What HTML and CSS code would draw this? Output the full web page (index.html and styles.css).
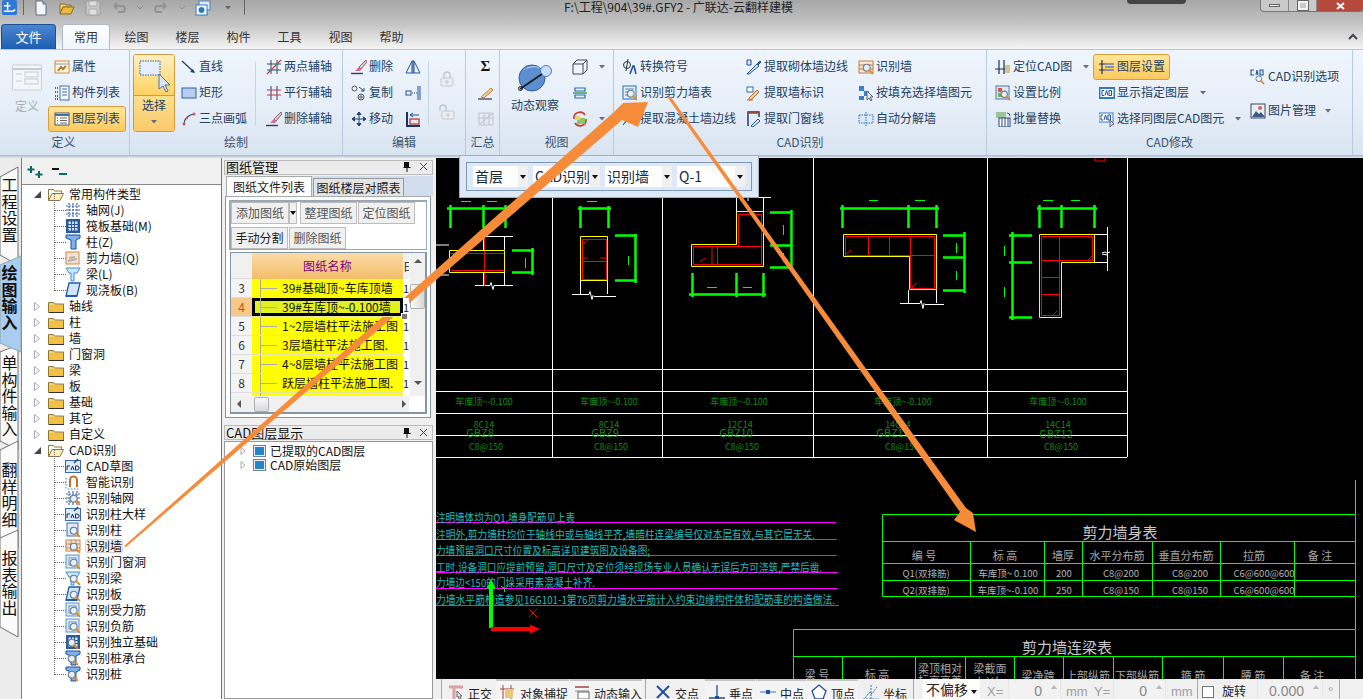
FILE: index.html
```html
<!DOCTYPE html>
<html lang="zh-CN">
<head>
<meta charset="utf-8">
<title>广联达-云翻样建模</title>
<link rel="stylesheet" href="styles.css">
</head>
<body>
<svg class="defs" width="0" height="0">
  <defs>
    <symbol id="mag" viewBox="0 0 16 16"><circle cx="7" cy="7" r="4.2" fill="#e8f0fa" stroke="#6a7f96" stroke-width="1.4"/><path d="M10 10l4 4" stroke="#d98a2b" stroke-width="2.4" stroke-linecap="round"/></symbol>
    <symbol id="grid" viewBox="0 0 16 16"><path d="M4 1v14M8 1v14M12 1v14M1 4h14M1 8h14M1 12h14" stroke="#3b66b8" stroke-width="1.2" stroke-dasharray="2 1" fill="none"/></symbol>
    <symbol id="raft" viewBox="0 0 16 16"><rect x="1" y="1" width="14" height="14" fill="#2a5a9c"/><rect x="3.5" y="3.5" width="9" height="9" fill="#cfe0f4"/><path d="M6.5 3v10M9.5 3v10M3 6.5h10M3 9.5h10" stroke="#2a5a9c"/></symbol>
    <symbol id="col" viewBox="0 0 16 16"><path d="M1 1h14v3l-4 2v9H6V6L1 4z" fill="#7fb2e6" stroke="#1f4f96"/></symbol>
    <symbol id="wall" viewBox="0 0 16 16"><rect x="1" y="2" width="13" height="12" fill="#efe3d6" stroke="#d9863f"/><path d="M3 11l9-2M4 8l6-1" stroke="#b9b0a8" stroke-width="2"/></symbol>
    <symbol id="beam" viewBox="0 0 16 16"><path d="M1 2h14l-3 5H9v8H6V7H4z" fill="#cfe6fa" stroke="#3f8fd0"/></symbol>
    <symbol id="slab" viewBox="0 0 16 16"><path d="M4 1h11l-3 13H1z" fill="#d4e4f7" stroke="#1f5ab0" stroke-width="1.3"/><path d="M1 14h11" stroke="#1f5ab0" stroke-width="2"/></symbol>
    <symbol id="cad" viewBox="0 0 16 16"><rect x=".5" y="2.5" width="15" height="12" fill="#dbe9f9" stroke="#3868ad"/><path d="M9 5l4-4" stroke="#24447c" stroke-width="1.4"/><path d="M2 12V8h3M6 12l1.500-4L9 12M10.500 8v4h1.600a2 2 0 000-4z" fill="none" stroke="#18325f"/></symbol>
    <symbol id="magnet" viewBox="0 0 16 16"><path d="M5 13V6a3.500 3.500 0 017 0v7" fill="none" stroke="#c8702a" stroke-width="2"/><path d="M1 4v11M3 15h10" stroke="#3b7fd0" stroke-dasharray="1.500 1.500" fill="none"/></symbol>
    <symbol id="dot" viewBox="0 0 16 16"><rect x="2" y="1" width="11" height="13" fill="#dfeaf7" stroke="#3f6eaf"/></symbol>
    <symbol id="door" viewBox="0 0 16 16"><rect x="1" y="1" width="13" height="13" fill="#dfeaf7" stroke="#5f8fc4"/><rect x="4" y="4" width="7" height="7" fill="#fff" stroke="#5f8fc4"/></symbol>
    <symbol id="brown" viewBox="0 0 16 16"><rect x="1" y="2" width="14" height="11" fill="#f6e8da" stroke="#cf7f4a"/><path d="M1 6h14M1 10h14M6 2v11M11 2v11" stroke="#cf7f4a"/></symbol>
    <symbol id="folder" viewBox="0 0 16 13"><path d="M.5 2.500h5l1 1.500h9v8.500H.5z" fill="#f7d266" stroke="#8a7a40"/><path d="M1 5h14v7H1z" fill="#f4c043"/><path d="M1 12.500h15" stroke="#333"/></symbol>
    <symbol id="folder-open" viewBox="0 0 16 13"><path d="M.5 1.500h5l1 1.500h7v2" fill="#fff6d8" stroke="#8a7a40"/><path d="M.5 12.500V1.500M.5 12.500h11.500l3.500-7H4z" fill="#fdeebc" stroke="#8a7a40"/></symbol>
    <symbol id="layer" viewBox="0 0 13 12"><rect x=".5" y=".5" width="12" height="11" fill="#eef" stroke="#6a8196"/><rect x="2" y="2" width="9" height="8" fill="#2585c6"/></symbol>
    <symbol id="brush" viewBox="0 0 16 16"><path d="M15 1l-7 7 2 2 6-7z" fill="#f0c8b0" stroke="#5f4a6a" stroke-width=".8"/><path d="M8 8c-2 1-2 3-4 4h5c1-1 1-1 1-2z" fill="#e85fa0"/><path d="M0 14.500h12" stroke="#2b3f5f" stroke-width="1.400"/></symbol>
    <symbol id="small-arrow" viewBox="0 0 6 4"><path d="M0 0h6L3 3.500z" fill="#5d6e80"/></symbol>
  </defs>
</svg>

<div class="app">
  <header class="titlebar">
    <div class="qat">
      <svg class="app-logo" viewBox="0 0 16 16"><rect width="16" height="16" rx="2" fill="#2f78d8"/><path d="M6 2v9M2 6h7M2 12h10l2-2" stroke="#fff" stroke-width="1.600" fill="none"/></svg>
      <span class="qat-sep"></span>
      <svg class="qat-ic first" viewBox="0 0 16 16"><path d="M3 1h7l3 3v11H3z" fill="#f4f6f9" stroke="#5f6d7c"/><path d="M10 1v3h3" fill="#aab6c4" stroke="#5f6d7c"/></svg>
      <svg class="qat-ic" viewBox="0 0 16 16"><path d="M1 4h5l1 1h5v2H4l-3 7z" fill="#f4d27a" stroke="#8a6d1f"/><path d="M1 14l3-7h11l-3 7z" fill="#eeb93f" stroke="#8a6d1f"/></svg>
      <svg class="qat-ic" viewBox="0 0 16 16"><path d="M1 1h12l2 2v12H1z" fill="#c8c8c8" stroke="#9c9c9c"/><path d="M4 1h8v5H4zM4 9h8v6H4z" fill="#dedede" stroke="#a9a9a9"/></svg>
      <svg class="qat-ic dim" viewBox="0 0 16 16"><path d="M3 6h8a3 3 0 010 6H7M3 6l3-3M3 6l3 3" fill="none" stroke="#929292" stroke-width="2"/></svg>
      <svg class="qat-arrow" viewBox="0 0 6 4"><path d="M0 0l3 3 3-3" fill="none" stroke="#8a8a8a"/></svg>
      <svg class="qat-ic dim" viewBox="0 0 16 16"><path d="M13 6H5a3 3 0 000 6h4M13 6l-3-3M13 6l-3 3" fill="none" stroke="#929292" stroke-width="2"/></svg>
      <svg class="qat-arrow" viewBox="0 0 6 4"><path d="M0 0l3 3 3-3" fill="none" stroke="#8a8a8a"/></svg>
      <svg class="qat-ic" viewBox="0 0 16 16"><rect x="4" y="1" width="11" height="9" fill="#dceaf7" stroke="#4f83bf"/><rect x="1" y="5" width="11" height="10" fill="#fff" stroke="#2f78c8"/><circle cx="6.500" cy="10" r="3" fill="#2f78c8"/></svg>
      <svg class="qat-arrow down" viewBox="0 0 6 4"><path d="M0 0h6L3 3.500z" fill="#666"/></svg>
      <span class="qat-sep late"></span>
    </div>
    <div class="title-text">F:\工程\904\39#.GFY2 - 广联达-云翻样建模</div>
    <div class="handle"></div>
    <div class="winbtns">
      <span class="winbtn"><i class="w-min"></i></span>
      <span class="winbtn"><i class="w-max"></i></span>
      <span class="winbtn close"><svg class="w-x" viewBox="0 0 9 8"><path d="M1 1l7 6M8 1L1 7" stroke="#fff" stroke-width="2"/></svg></span>
    </div>
  </header>

  <nav class="tabs">
    <span class="file-tab">文件</span>
    <span class="tab active">常用</span>
    <span class="tab">绘图</span>
    <span class="tab">楼层</span>
    <span class="tab">构件</span>
    <span class="tab">工具</span>
    <span class="tab">视图</span>
    <span class="tab">帮助</span>
    <svg class="collapse" viewBox="0 0 10 8"><path d="M1 7l4-4 4 4" fill="none" stroke="#445" stroke-width="2"/></svg>
  </nav>

  <section class="ribbon">
    <div class="group g1">
      <div class="rb-body">
        <div class="big disabled">
          <svg class="big-ic" viewBox="0 0 30 30"><rect x=".5" y="1" width="29" height="25" rx="1" fill="#f3f6fa" stroke="#c6ccd3"/><path d="M1 5h28" stroke="#c6ccd3" stroke-width="2"/><path d="M4 10h6M4 17h6" stroke="#c6ccd3"/><rect x="13" y="8" width="13" height="5" fill="none" stroke="#c6ccd3"/><rect x="13" y="15" width="13" height="5" fill="none" stroke="#c6ccd3"/></svg>
          <span class="big-label">定义</span>
        </div>
        <div class="col">
          <div class="item"><svg class="ic" viewBox="0 0 16 16"><rect x="1" y="2" width="14" height="12" fill="#fff5e0" stroke="#d88a3a"/><path d="M1 5h14" stroke="#7f9fc4"/><path d="M4 12l3-4 2 2 3-3" fill="none" stroke="#b57a20" stroke-width="2"/></svg><span>属性</span></div>
          <div class="item"><svg class="ic" viewBox="0 0 16 16"><path d="M1 3h3M1 7h3M1 11h3M1 14h3" stroke="#333" stroke-width="1.500" stroke-dasharray="1 1"/><rect x="6" y="1" width="9" height="14" fill="#f3f7fc" stroke="#4a6f9f"/><path d="M8 4h5M8 7h5M8 10h5" stroke="#4a6f9f"/></svg><span>构件列表</span></div>
          <div class="item on"><svg class="ic" viewBox="0 0 16 16"><rect x="1" y="2" width="14" height="12" fill="#fff" stroke="#555"/><path d="M1 4h14" stroke="#3f6fb0" stroke-width="2"/><path d="M6 7h7M6 9.500h7M6 12h7M3 7h1M3 9.500h1M3 12h1" stroke="#666"/></svg><span>图层列表</span></div>
        </div>
      </div>
      <div class="rb-label">定义</div>
    </div>

    <div class="group g2">
      <div class="rb-body">
        <div class="select-btn">
          <div class="select-top"><svg class="select-ic" viewBox="0 0 32 34"><rect x="1" y="1" width="20" height="14" fill="#e6eefa" stroke="#2c5fb0" stroke-dasharray="1.500 1"/><path d="M20 14v15l4-3 3 6 2-1-3-6h5z" fill="#d8e6f8" stroke="#4a72a8"/></svg></div>
          <div class="select-bottom"><span>选择</span><svg class="arrow" viewBox="0 0 6 4"><use href="#small-arrow"/></svg></div>
        </div>
        <div class="col w80">
          <div class="item"><svg class="ic" viewBox="0 0 16 16"><path d="M1 2l12 11" stroke="#1e3f6f" stroke-width="1.300"/><path d="M14 14l-5-1 3-3z" fill="#1e3f6f"/></svg><span>直线</span></div>
          <div class="item"><svg class="ic" viewBox="0 0 16 16"><rect x="1" y="3" width="14" height="10" fill="#b8cef0" stroke="#2c5fb0"/></svg><span>矩形</span></div>
          <div class="item"><svg class="ic" viewBox="0 0 16 16"><path d="M3 13C3 8 7 4 13 3" fill="none" stroke="#2b4f7f" stroke-width="1.200"/><circle cx="3" cy="13" r="1.500" fill="#d9534f"/><circle cx="13" cy="3" r="1.500" fill="#d9534f"/><circle cx="6" cy="7" r="1.200" fill="#d9534f"/></svg><span>三点画弧</span></div>
        </div>
        <span class="vsep"></span>
        <div class="col">
          <div class="item"><svg class="ic" viewBox="0 0 16 16"><path d="M5 1v14M11 1v14M1 5h14M1 11h14" stroke="#24447c"/><path d="M1 15L15 1" stroke="#d9343a" stroke-width="1.300"/><circle cx="5" cy="11" r="1.300" fill="#3e8f3e"/><circle cx="11" cy="5" r="1.300" fill="#3e8f3e"/></svg><span>两点辅轴</span></div>
          <div class="item"><svg class="ic" viewBox="0 0 16 16"><path d="M5 1v14M11 1v14" stroke="#24447c"/><path d="M1 5h14M1 10h14" stroke="#c8343a"/></svg><span>平行辅轴</span></div>
          <div class="item"><svg class="ic"><use href="#brush"/></svg><span>删除辅轴</span></div>
        </div>
      </div>
      <div class="rb-label">绘制</div>
    </div>

    <div class="group g3">
      <div class="rb-body">
        <div class="col">
          <div class="item"><svg class="ic"><use href="#brush"/></svg><span>删除</span></div>
          <div class="item"><svg class="ic" viewBox="0 0 16 16"><circle cx="3.500" cy="3.500" r="2.500" fill="none" stroke="#556"/><circle cx="10" cy="12" r="3" fill="none" stroke="#556"/><circle cx="10" cy="12" r="1.200" fill="none" stroke="#556"/><path d="M8 2l5 4M13 6V3M13 6h-3" fill="none" stroke="#24447c"/></svg><span>复制</span></div>
          <div class="item"><svg class="ic" viewBox="0 0 16 16"><path d="M8 1v14M1 8h14M8 1L6 3.500h4zM8 15l-2-2.500h4zM1 8l2.500-2v4zM15 8l-2.500-2v4z" fill="#24447c" stroke="#24447c"/></svg><span>移动</span></div>
        </div>
        <div class="col icons w28">
          <div class="item"><svg class="ic" viewBox="0 0 16 16"><path d="M7 2L1 14h6zM9 2l6 12H9z" fill="#eef4fb" stroke="#24509c"/><path d="M8 1v14" stroke="#24509c"/></svg></div>
          <div class="item"><svg class="ic" viewBox="0 0 16 16"><path d="M13 1v14M15 1v14" stroke="#24509c"/><rect x="1" y="6" width="5" height="4" fill="#eef4fb" stroke="#24509c"/><path d="M7 8h5" stroke="#24509c" stroke-dasharray="1 1"/></svg></div>
          <div class="item"><svg class="ic" viewBox="0 0 16 16"><path d="M2 1v14h13" stroke="#18326f" stroke-width="2" fill="none"/><rect x="5" y="8" width="9" height="5" fill="none" stroke="#c8343a" stroke-width="1.300"/><path d="M5 4h9M5 4l3-2M5 4l3 2" fill="none" stroke="#24509c"/></svg></div>
        </div>
        <span class="vsep tall"></span>
        <div class="locks">
          <svg class="ic" viewBox="0 0 16 16"><rect x="2" y="7" width="12" height="8" rx="1" fill="#eaedf1" stroke="#c3c9d1"/><path d="M5 7V4a3 3 0 016 0v3" fill="none" stroke="#c3c9d1" stroke-width="1.500"/><path d="M6 11h4M8 9v4" stroke="#c3c9d1"/></svg>
          <svg class="ic" viewBox="0 0 16 16"><rect x="3" y="7" width="12" height="8" rx="1" fill="#eaedf1" stroke="#c3c9d1"/><path d="M1 7V4a3 3 0 016 0v3" fill="none" stroke="#c3c9d1" stroke-width="1.500"/><path d="M7 11h4M9 9v4" stroke="#c3c9d1"/></svg>
        </div>
      </div>
      <div class="rb-label">编辑</div>
    </div>

    <div class="group g4">
      <div class="rb-body center">
        <div class="col icons">
          <div class="item"><span class="sigma">Σ</span></div>
          <div class="item"><svg class="ic" viewBox="0 0 16 16"><path d="M3 12L13 3l2 2-9 8z" fill="#f2c8a0" stroke="#c8843a"/><path d="M0 14h14" stroke="#333" stroke-width="1.200"/></svg></div>
          <div class="item"><svg class="ic" viewBox="0 0 16 16"><path d="M1 2h14v12H1zM1 7h14M6 2v12M11 2v12M2 13L14 3" fill="none" stroke="#bfc4ca"/></svg></div>
        </div>
      </div>
      <div class="rb-label">汇总</div>
    </div>

    <div class="group g5">
      <div class="rb-body">
        <div class="big orbit">
          <svg class="orbit-ic" viewBox="0 0 34 30"><circle cx="14" cy="15" r="13" fill="#5c8ed0" stroke="#2b5a9e"/><path d="M4 9a14 14 0 0120-3C18 3 8 4 4 9z" fill="#bcd4f0"/><circle cx="28" cy="8" r="5.500" fill="#c8ddf5" stroke="#4f7fbc"/><path d="M2 26L24 11" stroke="#1a1a1a" stroke-width="1.800"/><circle cx="2.500" cy="25.500" r="2" fill="none" stroke="#1a1a1a"/></svg>
          <span class="big-label dark">动态观察</span>
        </div>
        <div class="col view-col">
          <div class="item"><svg class="ic" viewBox="0 0 16 16"><path d="M1 5h10v10H1zM1 5l4-4h10v10l-4 4M11 5l4-4" fill="#f2f6fb" stroke="#3a4a5c"/></svg><svg class="arrow" viewBox="0 0 6 4"><use href="#small-arrow"/></svg></div>
          <div class="item"><svg class="ic" viewBox="0 0 16 16"><path d="M3 3h10v3H3zM3 10h10v3H3z" fill="none" stroke="#1f6fb8" stroke-width="1.200"/><path d="M1 8h14" stroke="#4a9a4a" stroke-width="1.500"/></svg></div>
          <div class="item"><svg class="ic" viewBox="0 0 16 16"><path d="M2 8a6 6 0 0111-4M14 8a6 6 0 01-11 4" fill="none" stroke="#c83a3a" stroke-width="1.600"/><rect x="5" y="7" width="8" height="6" fill="#8ac86a"/><rect x="3" y="5" width="5" height="4" fill="#f2d25a"/></svg><svg class="arrow" viewBox="0 0 6 4"><use href="#small-arrow"/></svg></div>
        </div>
      </div>
      <div class="rb-label">视图</div>
    </div>

    <div class="group g6">
      <div class="rb-body">
        <div class="col">
          <div class="item"><svg class="ic" viewBox="0 0 16 16"><circle cx="5" cy="6" r="3.500" fill="none" stroke="#333"/><path d="M6 0L4 12" stroke="#333"/><path d="M8 15l3-8h1l2 8" fill="none" stroke="#1f4fa0" stroke-width="1.600"/></svg><span>转换符号</span></div>
          <div class="item"><svg class="ic" viewBox="0 0 16 16"><rect x="1" y="1" width="13" height="13" fill="#e8f1fb" stroke="#1f6fb8"/><path d="M3 4h9M3 7h4M3 10h4" stroke="#6a7f96"/><use href="#mag" x="3" y="3" width="13" height="13"/></svg><span>识别剪力墙表</span></div>
          <div class="item"><svg class="ic" viewBox="0 0 16 16"><path d="M1 14L12 3l3 3-4 4H4z" fill="#dceaf7" stroke="#3a5a8c"/></svg><span>提取混凝土墙边线</span></div>
        </div>
        <div class="col pull">
          <div class="item"><svg class="ic" viewBox="0 0 16 16"><path d="M1 1v5h4V1zM1 15l10-10 2 2-10 8z" fill="#dceaf7" stroke="#1f4f96"/><path d="M11 5l3-3 1 1-3 3" fill="#3a6fb0" stroke="#1f4f96"/></svg><span>提取砌体墙边线</span></div>
          <div class="item"><svg class="ic" viewBox="0 0 16 16"><rect x="1" y="2" width="6" height="5" fill="#fff" stroke="#1f6fb8"/><path d="M3 13l8-8 2 2-8 8H3z" fill="#f0c8a0" stroke="#b8743a"/><path d="M1 15h6" stroke="#b8743a"/></svg><span>提取墙标识</span></div>
          <div class="item"><svg class="ic" viewBox="0 0 16 16"><path d="M2 15V1h11v5" fill="none" stroke="#18325f" stroke-width="1.400"/><path d="M2 2h11" stroke="#a04a2a" stroke-width="1.500"/><path d="M5 15l7-7 2 2-7 6z" fill="#dceaf7" stroke="#1f4f96"/></svg><span>提取门窗线</span></div>
        </div>
        <div class="col pull">
          <div class="item"><svg class="ic" viewBox="0 0 16 16"><rect x="1" y="2" width="14" height="12" fill="#f6e8da" stroke="#c87a3a"/><path d="M1 6h14M1 10h14" stroke="#c87a3a"/><use href="#mag" x="3" y="3" width="13" height="13"/></svg><span>识别墙</span></div>
          <div class="item"><svg class="ic" viewBox="0 0 16 16"><path d="M1 1h5v5H1zM6 6h5v5H6zM1 11h5v4H1z" fill="#3a7fd0"/><path d="M9 6v9l2-2 2 3 1-1-2-3h3z" fill="#e8eef5" stroke="#667"/></svg><span>按填充选择墙图元</span></div>
          <div class="item"><svg class="ic" viewBox="0 0 16 16"><path d="M1 4h14v8H1z" fill="#dceaf7" stroke="#1f6fb8" stroke-dasharray="1.500 1"/><path d="M8 1v14" stroke="#1f6fb8" stroke-dasharray="1.500 1"/></svg><span>自动分解墙</span></div>
        </div>
      </div>
      <div class="rb-label">CAD识别</div>
    </div>

    <div class="group g7">
      <div class="rb-body">
        <div class="col w104">
          <div class="item"><svg class="ic" viewBox="0 0 16 16"><path d="M4 1v14M9 1v14M0 10h14" stroke="#18325f" stroke-width="1.200"/><path d="M10 6h5v8h-5z" fill="#d8c48a"/></svg><span>定位CAD图</span><svg class="arrow" viewBox="0 0 6 4"><use href="#small-arrow"/></svg></div>
          <div class="item"><svg class="ic" viewBox="0 0 16 16"><rect x="1" y="1" width="13" height="13" fill="#dfe9f5" stroke="#4a77a8"/><rect x="3" y="3" width="4" height="4" fill="#d9534f"/><rect x="3" y="8" width="4" height="4" fill="#6ab04c"/><use href="#mag" x="4" y="4" width="12" height="12"/></svg><span>设置比例</span></div>
          <div class="item"><svg class="ic" viewBox="0 0 16 16"><rect x="1" y="1" width="10" height="6" fill="#9ac49a"/><rect x="4" y="7" width="11" height="9" fill="#fff" stroke="#2b4a7f"/><path d="M7 7v9M10 7v9M13 7v9" stroke="#2b4a7f"/><path d="M12 2a3 3 0 013 3" fill="none" stroke="#445"/></svg><span>批量替换</span></div>
        </div>
        <div class="col w151">
          <div class="item on narrow"><svg class="ic" viewBox="0 0 16 16"><path d="M3 1v14M0 5h6M0 11h6" stroke="#18325f" stroke-width="1.200"/><path d="M6 5h9M6 8h9M6 11h9" stroke="#1f4fc0"/></svg><span>图层设置</span></div>
          <div class="item"><svg class="ic" viewBox="0 0 16 16"><rect x="0" y="2" width="16" height="12" fill="#2f78c8"/><rect x="1.500" y="4" width="13" height="8" fill="#fff"/><path d="M5 5.500H3v5h2M6 10.500l1.500-5 1.500 5M10 5.500v5h2.500v-5z" fill="none" stroke="#1f4f96"/></svg><span>显示指定图层</span><svg class="arrow" viewBox="0 0 6 4"><use href="#small-arrow"/></svg></div>
          <div class="item"><svg class="ic" viewBox="0 0 16 16"><rect x="0" y="2" width="14" height="9" fill="#fff" stroke="#2f78c8"/><path d="M4 4H2v5h2M5 9l1.500-5L8 9M9 4v5h2.500V4z" fill="none" stroke="#1f4f96"/><path d="M11 9v7l2-2 2-1z" fill="#d8e0ea" stroke="#667"/></svg><span>选择同图层CAD图元</span><svg class="arrow" viewBox="0 0 6 4"><use href="#small-arrow"/></svg></div>
        </div>
        <div class="col spread">
          <div class="item"><svg class="ic" viewBox="0 0 16 16"><path d="M4 1H1v5h3M6 6l1-5 1 5M10 1v5h3V1z" fill="none" stroke="#1f4f96" stroke-width="1.100"/><use href="#mag" x="4" y="5" width="11" height="11"/></svg><span>CAD识别选项</span></div>
          <div class="item"><svg class="ic" viewBox="0 0 16 16"><rect x="1" y="1" width="14" height="14" fill="#e8eef5" stroke="#3a4a5c"/><path d="M2 14l4-6 3 3 2-2 4 5z" fill="#3a5a8c"/><circle cx="10" cy="5" r="2" fill="#d9634f"/></svg><span>图片管理</span><svg class="arrow wide" viewBox="0 0 6 4"><use href="#small-arrow"/></svg></div>
        </div>
      </div>
      <div class="rb-label">CAD修改</div>
    </div>
  </section>
  <div class="ribbon-foot"></div>

  <main class="work">
    <aside class="vtabs">
      <svg class="vtab-lines" viewBox="0 158 22 541">
        <path class="vt-white" d="M0 177L18 167V265L0 255z"/>
        <path class="vt-white" d="M0 352L18 345V450L0 441z"/>
        <path class="vt-white" d="M0 450L18 441V548L0 538z"/>
        <path class="vt-white" d="M0 538L18 530V637L0 627z"/>
        <path class="vt-active" d="M0 265L21 256V352L0 343z"/>
      </svg>
      <span class="vtab t1">工程设置</span>
      <span class="vtab t2 active">绘图输入</span>
      <span class="vtab t3">单构件输入</span>
      <span class="vtab t4">翻样明细</span>
      <span class="vtab t5">报表输出</span>
    </aside>

    <section class="tree-panel">
      <div class="tree-tools">
        <svg class="tool-ic" viewBox="0 0 17 13"><path d="M4 1v7M0.500 4.500h7M12 6v7M8.500 9.500h7" stroke="#0b6b62" stroke-width="2" fill="none"/></svg>
        <svg class="tool-ic" viewBox="0 0 17 13"><path d="M1 4h7" stroke="#111" stroke-width="2"/><path d="M8 9h8" stroke="#0b6b62" stroke-width="2"/></svg>
      </div>
      <div class="tree">
        <div class="node open"><svg class="exp" viewBox="0 0 9 9"><path d="M8 1v7H1z" fill="#444"/></svg><svg class="fold" viewBox="0 0 16 13"><use href="#folder-open"/></svg><span>常用构件类型</span></div>
        <div class="node child"><svg class="ti"><use href="#grid"/></svg><span>轴网(J)</span></div>
        <div class="node child"><svg class="ti"><use href="#raft"/></svg><span>筏板基础(M)</span></div>
        <div class="node child"><svg class="ti"><use href="#col"/></svg><span>柱(Z)</span></div>
        <div class="node child"><svg class="ti"><use href="#wall"/></svg><span>剪力墙(Q)</span></div>
        <div class="node child"><svg class="ti"><use href="#beam"/></svg><span>梁(L)</span></div>
        <div class="node child"><svg class="ti"><use href="#slab"/></svg><span>现浇板(B)</span></div>
        <div class="node"><svg class="exp" viewBox="0 0 9 9"><path d="M1.500 .500l5 4-5 4z" fill="#fff" stroke="#aaa"/></svg><svg class="fold" viewBox="0 0 16 13"><use href="#folder"/></svg><span>轴线</span></div>
        <div class="node"><svg class="exp" viewBox="0 0 9 9"><path d="M1.500 .500l5 4-5 4z" fill="#fff" stroke="#aaa"/></svg><svg class="fold" viewBox="0 0 16 13"><use href="#folder"/></svg><span>柱</span></div>
        <div class="node"><svg class="exp" viewBox="0 0 9 9"><path d="M1.500 .500l5 4-5 4z" fill="#fff" stroke="#aaa"/></svg><svg class="fold" viewBox="0 0 16 13"><use href="#folder"/></svg><span>墙</span></div>
        <div class="node"><svg class="exp" viewBox="0 0 9 9"><path d="M1.500 .500l5 4-5 4z" fill="#fff" stroke="#aaa"/></svg><svg class="fold" viewBox="0 0 16 13"><use href="#folder"/></svg><span>门窗洞</span></div>
        <div class="node"><svg class="exp" viewBox="0 0 9 9"><path d="M1.500 .500l5 4-5 4z" fill="#fff" stroke="#aaa"/></svg><svg class="fold" viewBox="0 0 16 13"><use href="#folder"/></svg><span>梁</span></div>
        <div class="node"><svg class="exp" viewBox="0 0 9 9"><path d="M1.500 .500l5 4-5 4z" fill="#fff" stroke="#aaa"/></svg><svg class="fold" viewBox="0 0 16 13"><use href="#folder"/></svg><span>板</span></div>
        <div class="node"><svg class="exp" viewBox="0 0 9 9"><path d="M1.500 .500l5 4-5 4z" fill="#fff" stroke="#aaa"/></svg><svg class="fold" viewBox="0 0 16 13"><use href="#folder"/></svg><span>基础</span></div>
        <div class="node"><svg class="exp" viewBox="0 0 9 9"><path d="M1.500 .500l5 4-5 4z" fill="#fff" stroke="#aaa"/></svg><svg class="fold" viewBox="0 0 16 13"><use href="#folder"/></svg><span>其它</span></div>
        <div class="node"><svg class="exp" viewBox="0 0 9 9"><path d="M1.500 .500l5 4-5 4z" fill="#fff" stroke="#aaa"/></svg><svg class="fold" viewBox="0 0 16 13"><use href="#folder"/></svg><span>自定义</span></div>
        <div class="node open"><svg class="exp" viewBox="0 0 9 9"><path d="M8 1v7H1z" fill="#444"/></svg><svg class="fold" viewBox="0 0 16 13"><use href="#folder-open"/></svg><span>CAD识别</span></div>
        <div class="node child"><svg class="ti"><use href="#cad"/></svg><span>CAD草图</span></div>
        <div class="node child"><svg class="ti"><use href="#magnet"/></svg><span>智能识别</span></div>
        <div class="node child"><svg class="ti"><use href="#grid"/><use href="#mag" x="3" y="3" width="13" height="13"/></svg><span>识别轴网</span></div>
        <div class="node child"><svg class="ti"><use href="#cad"/></svg><span>识别柱大样</span></div>
        <div class="node child"><svg class="ti"><use href="#dot"/><use href="#mag" x="3" y="3" width="13" height="13"/></svg><span>识别柱</span></div>
        <div class="node child sel"><svg class="ti"><use href="#brown"/><use href="#mag" x="3" y="3" width="13" height="13"/></svg><span>识别墙</span></div>
        <div class="node child"><svg class="ti"><use href="#door"/><use href="#mag" x="3" y="3" width="13" height="13"/></svg><span>识别门窗洞</span></div>
        <div class="node child"><svg class="ti"><use href="#beam"/><use href="#mag" x="3" y="3" width="13" height="13"/></svg><span>识别梁</span></div>
        <div class="node child"><svg class="ti"><use href="#slab"/><use href="#mag" x="3" y="3" width="13" height="13"/></svg><span>识别板</span></div>
        <div class="node child"><svg class="ti"><use href="#door"/><use href="#mag" x="3" y="3" width="13" height="13"/></svg><span>识别受力筋</span></div>
        <div class="node child"><svg class="ti"><use href="#door"/><use href="#mag" x="3" y="3" width="13" height="13"/></svg><span>识别负筋</span></div>
        <div class="node child"><svg class="ti"><use href="#raft"/><use href="#mag" x="1" y="3" width="13" height="13"/></svg><span>识别独立基础</span></div>
        <div class="node child"><svg class="ti"><use href="#col"/><use href="#mag" x="1" y="3" width="13" height="13"/></svg><span>识别桩承台</span></div>
        <div class="node child"><svg class="ti"><use href="#col"/><use href="#mag" x="1" y="3" width="13" height="13"/></svg><span>识别桩</span></div>
      </div>
    </section>

    <section class="mid">
      <div class="dock-title"><span>图纸管理</span><svg class="pin" viewBox="0 0 9 11"><path d="M2 1h5v5h1.500v1h-3v4h-1V7h-3V6H2z" fill="#111"/></svg><svg class="dock-x" viewBox="0 0 9 9"><path d="M1 1l7 7M8 1L1 8" stroke="#444" fill="none"/></svg></div>
      <div class="dock-tabs"><span class="dtab active">图纸文件列表</span><span class="dtab">图纸楼层对照表</span></div>
      <div class="dwg-body">
        <div class="dwg-tools">
          <div class="btn-row"><span class="btn b58">添加图纸</span><span class="btn dd"><i></i></span><span class="btn b57 gap3">整理图纸</span><span class="btn b57 gap1">定位图纸</span></div>
          <div class="btn-row"><span class="btn b57 strong">手动分割</span><span class="btn b57 gap1">删除图纸</span></div>
        </div>
        <div class="dwg-grid">
          <div class="grid-view">
            <div class="grid-rows">
              <div class="grow head"><span class="num"></span><span class="name">图纸名称</span><span class="extra">日</span></div>
              <div class="grow"><span class="num">3</span><span class="name">39#基础顶~车库顶墙</span><span class="extra">1</span></div>
              <div class="grow cur"><span class="num">4</span><span class="name">39#车库顶~-0.100墙</span><span class="extra">1</span></div>
              <div class="grow"><span class="num">5</span><span class="name">1~2层墙柱平法施工图</span><span class="extra">1</span></div>
              <div class="grow"><span class="num">6</span><span class="name">3层墙柱平法施工图.</span><span class="extra">1</span></div>
              <div class="grow"><span class="num">7</span><span class="name">4~8层墙柱平法施工图</span><span class="extra">1</span></div>
              <div class="grow"><span class="num">8</span><span class="name">跃层墙柱平法施工图.</span><span class="extra">1</span></div>
              <div class="grow"><span class="num"></span><span class="name">一层顶梁配筋平法图</span><span class="extra">1</span></div>
            </div>
            <div class="vscroll"><svg viewBox="0 0 8 5"><path d="M0 5l4-4 4 4z" fill="#555"/></svg><i class="thumb"></i><svg class="sb-end" viewBox="0 0 8 5"><path d="M0 0l4 4 4-4z" fill="#555"/></svg></div>
          </div>
          <div class="hscroll"><svg viewBox="0 0 5 8"><path d="M5 0L1 4l4 4z" fill="#555"/></svg><i class="thumb-h"></i><svg class="sb-end" viewBox="0 0 5 8"><path d="M0 0l4 4-4 4z" fill="#555"/></svg></div>
        </div>
      </div>
      <div class="dock-title second"><span>CAD图层显示</span><svg class="pin" viewBox="0 0 9 11"><path d="M2 1h5v5h1.500v1h-3v4h-1V7h-3V6H2z" fill="#111"/></svg><svg class="dock-x" viewBox="0 0 9 9"><path d="M1 1l7 7M8 1L1 8" stroke="#444" fill="none"/></svg></div>
      <div class="layer-tree">
        <div class="layer-row"><svg class="lexp" viewBox="0 0 6 8"><path d="M1 .5l4 3.500-4 3.500z" fill="#fff" stroke="#aaa"/></svg><svg class="lic"><use href="#layer"/></svg><span>已提取的CAD图层</span></div>
        <div class="layer-row"><svg class="lexp" viewBox="0 0 6 8"><path d="M1 .5l4 3.500-4 3.500z" fill="#fff" stroke="#aaa"/></svg><svg class="lic"><use href="#layer"/></svg><span>CAD原始图层</span></div>
      </div>
    </section>

    <section class="stage">
      <svg class="cad" viewBox="436 158 927 521">
        <g class="white">
          <path d="M552.500 158V457M662.500 158V457M813.500 158V457M987.500 158V457M1127.500 158V457"/>
          <path d="M436 369.500H1127M436 391.500H1127M436 413.500H1127M436 435.500H1127M436 457.500H1127"/>
          <path d="M436 245H449M436 275H449M475 236.500H513M483.500 236V250M504.500 236V250M483.500 272V285M504.500 272V285M475 285.500H490l1-3 2 7 1-4h1H513"/>
          <path d="M580.500 280V294M607.500 280V294M572 294.500H589l1-3 2 8 1-4 1 1H616"/>
          <path d="M736.500 197V212M763.500 197V212M736 197.500H771M748 197v4"/>
          <path d="M908.500 290V303M936.500 290V303M900 303.500H920l1-3 2 8 1-5 1 1H944"/>
          <path d="M1094 234.500H1107M1094 262.500H1107M1107.500 227V271M1102 253l3-1 2 1 3-1M1102 254l5 1"/>
        </g>
        <g class="green">
          <path d="M447 208.500H508M450.500 205V228M483.500 205V228M505.500 205V228"/>
          <path d="M512 250.500H534M512 272.500H534M532.500 248V275"/>
          <path d="M578 208.500H611M580.500 206V228M608.500 206V228"/>
          <path d="M615 235.500H637M615 280.500H637M635.500 234V283"/>
          <path d="M689 294.500H766M692.500 273V297M736.500 273V297M763.500 273V297"/>
          <path d="M770 212.500H792M770 245.500H792M770 267.500H792M791.500 210V269"/>
          <path d="M840 208.500H939M842.500 205V228M908.500 205V228M936.500 205V228"/>
          <path d="M943 235.500H965M943 257.500H965M943 290.500H965M964.500 232V293"/>
          <path d="M1037 208.500H1097M1039.500 205V228M1061.500 205V228M1094.500 205V228"/>
          <path d="M1009 235.500H1032M1009 262.500H1032M1009 317.500H1032M1012.500 232V320"/>
        </g>
        <g class="green-thin">
          <path d="M461 201.500H471M487 201.500H497M587 201.500H597M707 287.500H717M743 287.500H752M869 200.500H878M915 200.500H925M1043 200.500H1053M1071 200.500H1080"/>
          <path d="M525.500 258V268M628.500 256V265M783.500 225V235M783.500 253V262M956.500 243V253M956.500 271V280M1004.500 246V256M1004.500 287V297"/>
        </g>
        <g class="red">
          <path d="M449 253.500H504M451 270.500H504M484.500 236V286M452 256l4-3M455 259l4-3"/>
          <path d="M582.500 239.500H606.500V279.500H582.500ZM582 261.500H606M582 258h6M600 258h6M584 243l4-3"/>
          <path d="M738.500 214.500H761.500V264.500H693.500V246.500H738.500ZM738 246.500H761M717.500 246V264M700 262l5-4M712 246v10M712 256v8"/>
          <path d="M845.500 236.500H934.500V288.500H910.500V255.500H845.500ZM868.500 236V255M889.500 236V255M910.500 236V256M910 255.500H934M846 254l5-4M912 287l5-4"/>
          <path d="M1041.500 236.500H1092.500V260.500H1059.500V315.500H1041.500ZM1059.500 236V260M1041 260.500H1059M1041 277.500H1059M1041 294.500H1059M1088 260l4-4M1053 315l4-4"/>
          <path d="M1095 158V161H1105V158"/>
        </g>
        <g class="yellow">
          <path d="M449.500 250.500H504.500V272.500H449.500Z"/>
          <path d="M580.500 236.500H607.500V280.500H580.500Z"/>
          <path d="M736.500 211.500H763.500V266.500H691.500V244.500H736.500Z"/>
          <path d="M843.500 234.500H936.500V289.500H909.500V256.500H843.500Z"/>
          <path d="M1039.500 234.500H1094.500V262.500H1061.500V317.500H1039.500Z"/>
        </g>

        <g class="t-small">
          <text x="484" y="405">车库顶~-0.100</text><text x="609" y="405">车库顶~-0.100</text><text x="739" y="405">车库顶~-0.100</text><text x="903" y="405">车库顶~-0.100</text><text x="1058" y="405">车库顶~-0.100</text>
          <text x="484" y="428">8C14</text><text x="609" y="428">8C14</text><text x="740" y="428">12C14</text><text x="898" y="428">14C14</text><text x="1058" y="428">14C14</text>
          <text x="486" y="450">C8@150</text><text x="611" y="450">C8@150</text><text x="742" y="450">C8@150</text><text x="902" y="450">C8@150</text><text x="1061" y="450">C8@150</text>
        </g>
        <g class="t-gbz">
          <text x="480" y="437">GBZ8</text><text x="605" y="437">GBZ9</text><text x="736" y="437">GBZ10</text><text x="893" y="437">GBZ11</text><text x="1056" y="438">GBZ12</text>
        </g>

        <g class="magenta">
          <path d="M436 522.500H836M436 539.500H837M436 555.500H837M436 572.500H838M436 588.500H838M436 605.500H839"/>
        </g>
        <g class="t-note">
          <text x="436" y="522" textLength="139" lengthAdjust="spacingAndGlyphs">注明墙体均为Q1,墙身配筋见上表</text>
          <text x="436" y="539" textLength="379" lengthAdjust="spacingAndGlyphs">注明外,剪力墙柱均位于轴线中或与轴线平齐,墙暗柱连梁编号仅对本层有效,与其它层无关.</text>
          <text x="436" y="555" textLength="214" lengthAdjust="spacingAndGlyphs">力墙预留洞口尺寸位置及标高详见建筑图及设备图;</text>
          <text x="436" y="572" textLength="386" lengthAdjust="spacingAndGlyphs">工时,设备洞口应提前预留,洞口尺寸及定位须经现场专业人员确认无误后方可浇筑,严禁后凿.</text>
          <text x="436" y="587" textLength="159" lengthAdjust="spacingAndGlyphs">力墙边&lt;150的门垛采用素混凝土补齐.</text>
          <text x="436" y="604" textLength="399" lengthAdjust="spacingAndGlyphs">力墙水平筋构造参见16G101-1第76页剪力墙水平筋计入约束边缘构件体积配筋率的构造做法.</text>
        </g>

        <path class="axis-g" d="M489 628V589H486.500L491 579 495.500 589H493V628Z"/>
        <path class="axis-r" d="M491 627H530V624.500L540 629 530 633.500V631H491Z"/>
        <path class="red" d="M529 609L537 617M537 609L529 617"/>
        <path class="green-thin" d="M501 586L504.500 589 508 586M504.500 589V592"/>

        <g class="green-line">
          <path d="M882.500 514.500H1355.500V596.500H882.500ZM882 541.500H1355M882 563.500H1355M882 580.500H1355"/>
          <path d="M970.500 541V596M1044.500 541V596M1082.500 541V596M1152.500 541V596M1220.500 541V596M1294.500 541V596"/>
          <path d="M793.500 680V629.500H1355.500V680M793 656.500H1355"/>
          <path d="M842.500 656V680M915.500 656V680M965.500 656V680M1014.500 656V680M1063.500 656V680M1113.500 656V680M1162.500 656V680M1223.500 656V680M1283.500 656V680"/>
        </g>
        <path class="cyan" d="M1355.500 480V514M1355.500 597V629"/>
        <g class="t-title">
          <text x="1120" y="538">剪力墙身表</text>
          <text x="1067" y="653">剪力墙连梁表</text>
        </g>
        <g class="t-head">
          <text x="924" y="560">编 号</text><text x="1005" y="560">标 高</text><text x="1063" y="560">墙厚</text><text x="1117" y="560">水平分布筋</text><text x="1186" y="560">垂直分布筋</text><text x="1254" y="560">拉筋</text><text x="1320" y="560">备 注</text>
          <text x="817" y="679">梁 号</text><text x="877" y="679">标 高</text><text x="940" y="673">梁顶相对</text><text x="940" y="685">标高高差</text><text x="990" y="673">梁截面</text><text x="990" y="685">b×h</text><text x="1038" y="680">梁净跨</text><text x="1088" y="680">上部纵筋</text><text x="1137" y="680">下部纵筋</text><text x="1193" y="680">箍 筋</text><text x="1253" y="680">腰 筋</text><text x="1312" y="680">备 注</text>
        </g>
        <g class="t-cell">
          <text x="926" y="577">Q1(双排筋)</text><text x="1008" y="577">车库顶~ 0.100</text><text x="1064" y="577">200</text><text x="1121" y="577">C8@200</text><text x="1190" y="577">C8@200</text><text x="1264" y="577">C6@600@600</text>
          <text x="926" y="594">Q2(双排筋)</text><text x="1008" y="594">车库顶~-0.100</text><text x="1064" y="594">250</text><text x="1121" y="594">C8@150</text><text x="1190" y="594">C8@150</text><text x="1264" y="594">C6@600@600</text>
        </g>
      </svg>
      <div class="statusbar">
        <span class="sb-sep s441"></span>
        <span class="sb-btn w51"><svg class="sb-ic" viewBox="0 0 16 16"><path d="M1 3h14M6 3v12" stroke="#d8a0a0" stroke-width="3" fill="none"/><path d="M9 7l5 5-2 0 1 3-2 0-1-3-1 1z" fill="#dfe6ee" stroke="#667"/></svg><b>正交</b></span>
        <span class="sb-btn w73 on"><svg class="sb-ic" viewBox="0 0 16 16"><path d="M3 1v14M11 1v14M0 5h14" stroke="#a04a3a"/><path d="M5 5h8v9H5z" fill="#e6c878"/></svg><b>对象捕捉</b></span>
        <span class="sb-btn w72 on"><svg class="sb-ic" viewBox="0 0 16 16"><path d="M1 3h14" stroke="#a04a4a" stroke-width="1.500"/><path d="M1 7h14" stroke="#888"/><rect x="4" y="8" width="11" height="7" fill="#fff" stroke="#666"/></svg><b>动态输入</b></span>
        <span class="sb-sep s646"></span>
        <span class="sb-btn w53"><svg class="sb-ic" viewBox="0 0 16 16"><path d="M2 2l12 12M14 2L2 14" stroke="#1f4fa0" stroke-width="2"/></svg><b>交点</b></span>
        <span class="sb-btn w50 on"><svg class="sb-ic" viewBox="0 0 16 16"><path d="M8 1v13M0 14h16" stroke="#1f4fa0" stroke-width="1.300"/><rect x="6" y="12" width="4" height="4" fill="#1f4fa0"/></svg><b>垂点</b></span>
        <span class="sb-btn w50 on"><svg class="sb-ic" viewBox="0 0 16 16"><path d="M0 8h16" stroke="#5f8fc8" stroke-width="1.300"/><rect x="6" y="6" width="4" height="4" fill="#1f4fa0"/></svg><b>中点</b></span>
        <span class="sb-btn w51 on"><svg class="sb-ic" viewBox="0 0 16 16"><path d="M8 1l7 6-3 8H4L1 7z" fill="#fff" stroke="#1f4fa0" stroke-width="1.300"/></svg><b>顶点</b></span>
        <span class="sb-btn w48"><svg class="sb-ic" viewBox="0 0 16 16"><path d="M2 14L7 8l2 2 5-7M0 15h16M8 1v14" fill="none" stroke="#2f78c8" stroke-dasharray="2 1"/></svg><b>坐标</b></span>
        <span class="sb-sep s911"></span>
        <span class="sb-select">不偏移<i></i></span>
        <span class="sb-lbl lx">X=</span>
        <span class="sb-input w53i">0<em></em></span>
        <span class="sb-lbl lmm">mm</span>
        <span class="sb-lbl ly">Y=</span>
        <span class="sb-input w53i">0<em></em></span>
        <span class="sb-lbl lmm">mm</span>
        <span class="sb-sep s1193"></span>
        <span class="sb-check"></span>
        <span class="sb-text">旋转</span>
        <span class="sb-input w66i">0.000<em></em></span>
        <span class="sb-lbl deg">°</span>
        <span class="sb-sep s1328"></span>
      </div>
    </section>
  </main>

  <div class="float-bar">
    <div class="float-inner">
      <span class="combo c55">首层<i></i></span>
      <span class="combo c67">CAD识别<i></i></span>
      <span class="combo c67">识别墙<i></i></span>
      <span class="combo c68">Q-1<i></i></span>
    </div>
  </div>

  <svg class="arrows" viewBox="0 0 1363 699">
    <path d="M124 546L126 547 622 120 638 127 648 102 623 103 614 112Z" class="arrow-fill"/>
    <path d="M668 98L670 96 966 508 973 513 976 532 954 520 960 512Z" class="arrow-fill"/>
  </svg>
</div>
</body>
</html>
```

FILE: styles.css
```css
* { box-sizing: border-box; }
html, body { margin: 0; padding: 0; background: #fff; }
body { font-family: "Noto Sans CJK SC", "Liberation Sans", sans-serif; font-size: 12px; color: #1a1a1a; line-height: 1; }
.defs { position: absolute; }
.app { position: relative; width: 1363px; height: 699px; overflow: hidden; display: flex; flex-direction: column; }

/* title bar */
.titlebar { height: 24px; flex: none; display: flex; align-items: flex-start; position: relative; background: linear-gradient(#a7a7a7, #c4c4c4); }
.qat { display: flex; align-items: center; height: 15px; padding-left: 2px; }
.app-logo { width: 15px; height: 15px; }
.qat-sep { width: 1px; height: 15px; background: #666; margin-left: 6px; }
.qat-sep.late { margin-left: 13px; }
.qat-ic { width: 16px; height: 16px; margin-left: 10px; }
.qat-ic.first { margin-left: 9px; }
.qat-arrow { width: 6px; height: 4px; margin-left: 10px; }
.qat-arrow.down { margin-left: 14px; }
.title-text { position: absolute; left: 564px; top: 0; font-size: 12px; line-height: 14px; color: #222; white-space: nowrap; }
.handle { position: absolute; left: 1127px; top: 0; width: 59px; height: 4px; background: #444; border-radius: 0 0 4px 4px; }
.winbtns { position: absolute; left: 1260px; top: 0; display: flex; height: 12px; border: 1px solid #777; border-top: 0; border-radius: 0 0 4px 4px; overflow: hidden; background: #c9c9c9; }
.winbtn { width: 28px; display: flex; align-items: center; justify-content: center; border-right: 1px solid #888; }
.winbtn.close { width: 46px; background: #b54a3c; border: 0; }
.w-x { width: 9px; height: 8px; }
.w-min { display: block; width: 11px; height: 3px; background: #f2f2f2; border: 1px solid #666; }
.w-max { display: block; width: 10px; height: 9px; border: 2px solid #f2f2f2; outline: 1px solid #666; }

/* tabs */
.tabs { height: 25px; flex: none; display: flex; align-items: flex-end; background: linear-gradient(#c4c4c4, #f5f5f5); position: relative; }
.file-tab { width: 55px; height: 25px; margin-left: 1px; display: flex; align-items: center; justify-content: center; color: #fff; font-size: 13px; background: linear-gradient(#4b86d0, #1f5db0); border: 1px solid #1c4f96; border-bottom: 0; border-radius: 4px 4px 0 0; padding-bottom: 1px; }
.tab { width: 51px; height: 24px; display: flex; align-items: center; justify-content: center; color: #333; font-size: 12px; padding-bottom: 1px; }
.tab:nth-child(2) { width: 48px; height: 25px; margin-left: 6px; margin-right: 1px; }
.tab.active { background: linear-gradient(#fff, #f1f6fc); border: 1px solid #a9bbd0; border-bottom: 0; border-radius: 3px 3px 0 0; }
.collapse { position: absolute; right: 5px; top: 8px; width: 10px; height: 8px; }

/* ribbon */
.ribbon { height: 106px; flex: none; display: flex; background: linear-gradient(#eff5fc, #e6eef8 55%, #d9e4f1); border-top: 1px solid #b5c6d9; color: #24405f; }
.ribbon-foot { height: 3px; flex: none; background: linear-gradient(#a4b7cb, #dfe8f2); }
.group { display: flex; flex-direction: column; border-right: 1px solid #b9cadd; flex: none; }
.g1 { width: 130px; } .g2 { width: 213px; } .g3 { width: 123px; } .g4 { width: 34px; } .g5 { width: 114px; } .g6 { width: 373px; } .g7 { width: 366px; }
.rb-body { height: 83px; padding-top: 4px; display: flex; align-items: flex-start; }
.rb-body.center { justify-content: center; }
.rb-label { height: 22px; text-align: center; line-height: 18px; font-size: 12px; color: #3a5470; }
.g1 .rb-label { padding-right: 2px; }
.col { display: flex; flex-direction: column; flex: none; }
.g3 .rb-body, .g6 .rb-body, .g7 .rb-body { padding-left: 2px; }
.pull { margin-left: -2px; }
.w80 { width: 80px; } .w28 { width: 28px; } .w104 { width: 104px; } .w151 { width: 151px; }
.item { height: 26px; display: flex; align-items: center; gap: 2px; padding: 0 6px; white-space: nowrap; }
.item > span { position: relative; top: -1px; }
.item.on { background: linear-gradient(#ffe69a, #fdc95f); border: 1px solid #d69f3a; border-radius: 3px; padding: 0 5px; }
.item.narrow { width: 77px; }
.ic { width: 16px; height: 16px; flex: none; }
.icons .item { padding: 0 0 0 6px; }
.arrow { width: 6px; height: 4px; margin-left: 9px; flex: none; }
.arrow.wide { margin-left: 7px; }
.big { width: 42px; height: 78px; margin-left: 6px; display: flex; flex-direction: column; align-items: center; padding-top: 10px; }
.big-ic { width: 30px; height: 30px; }
.big-label { margin-top: 6px; color: #a9b0b8; }
.big-label.dark { color: #24405f; margin-top: 6px; }
.select-btn { width: 42px; height: 78px; margin-left: 3px; border: 1px solid #d29a3a; border-radius: 3px; overflow: hidden; display: flex; flex-direction: column; }
.select-top { height: 41px; background: linear-gradient(#fff0c0, #fdd25f); border-bottom: 1px solid #d29a3a; padding: 5px 0 0 5px; }
.select-ic { width: 32px; height: 34px; display: block; }
.select-bottom { flex: 1; background: linear-gradient(#fcdf90, #fbc96a); display: flex; flex-direction: column; align-items: center; padding-top: 3px; }
.select-bottom .arrow { margin: 9px 0 0; }
.vsep { width: 1px; height: 64px; margin: 8px 4px 0 0; background: #c5d3e2; flex: none; }
.vsep.tall { margin: 8px 0 0 1px; }
.locks { display: flex; flex-direction: column; gap: 17px; margin: 17px 0 0 10px; }
.sigma { font-family: "Liberation Serif", serif; font-weight: 700; font-size: 15px; color: #111; width: 16px; text-align: center; }
.orbit { width: 54px; margin-left: 8px; padding-top: 9px; }
.orbit-ic { width: 34px; height: 30px; }
.view-col { margin-left: 4px; }
.spread { gap: 8px; padding-top: 10px; margin-left: 0; }

/* main */
.work { flex: 1; min-height: 0; display: flex; }

.vtabs { width: 22px; flex: none; position: relative; display: flex; flex-direction: column; align-items: center; padding-right: 2px; background: #ececec; border-right: 1px solid #808080; }
.vtab-lines { position: absolute; left: 0; top: 0; width: 22px; height: 541px; }
.vt-white { fill: #fbfbfb; stroke: #707070; stroke-width: 1; }
.vt-active { fill: #a9cdf0; stroke: #8aa; stroke-width: 1; }
.vtab { position: relative; writing-mode: vertical-rl; text-orientation: upright; font-size: 16px; letter-spacing: .5px; color: #111; line-height: 18px; }
.vtab.active { font-weight: 700; }
.t1 { margin-top: 19px; } .t2 { margin-top: 22px; } .t3 { margin-top: 24px; } .t4 { margin-top: 24px; } .t5 { margin-top: 22px; }

.tree-panel { width: 200px; flex: none; display: flex; flex-direction: column; background: #fff; border-right: 1px solid #777; }
.tree-tools { height: 27px; flex: none; background: #f0f0f0; border-bottom: 1px solid #888; display: flex; align-items: center; gap: 7px; padding-left: 5px; }
.tool-ic { width: 17px; height: 13px; }
.tree { flex: 1; overflow: hidden; padding-top: 1px; background: #fff; }
.node { height: 16px; display: flex; align-items: center; position: relative; padding-left: 11px; font-size: 12px; color: #111; white-space: nowrap; }
.exp { width: 9px; height: 9px; flex: none; margin-right: 6px; }
.fold { width: 16px; height: 13px; flex: none; margin-right: 5px; }
.child { padding-left: 43px; }
.child::before { content: ""; position: absolute; left: 32px; top: -8px; width: 11px; height: 16px; border-left: 1px dotted #666; border-bottom: 1px dotted #666; }
.ti { width: 16px; height: 16px; flex: none; margin-right: 5px; position: relative; }
.sel span { box-shadow: 0 0 0 1px #d6d6d6; background: #f4f4f4; border-radius: 2px; }

/* middle docks */
.mid { width: 214px; flex: none; display: flex; flex-direction: column; background: #f0f0f0; }
.dock-title { height: 15px; margin: 2px 3px 1px 2px; flex: none; display: flex; align-items: center; border: 1px solid #bbb; background: #ececec; font-size: 13px; color: #111; padding: 0 0 2px 1px; white-space: nowrap; }
.dock-title > span:first-child { flex: 1; }
.dock-title.second { margin-top: 7px; padding-bottom: 0; }
.pin { width: 9px; height: 11px; margin-right: 8px; }
.dock-x { width: 9px; height: 9px; margin-right: 4px; }
.dock-tabs { height: 20px; margin: 0 3px 0 4px; flex: none; display: flex; align-items: flex-end; background: #d1deed; }
.dtab { height: 18px; width: 91px; display: flex; align-items: center; justify-content: center; background: #e4e4e4; border: 1px solid #999; border-bottom: 0; font-size: 12px; margin-left: 1px; }
.dtab.active { height: 20px; width: 86px; background: #fff; margin-left: 0; border-color: #aaa; }
.dwg-body { height: 222px; margin: 0 5px 0 3px; flex: none; background: #fff; border: 1px solid #8296a8; border-top: 1px solid #aaa; padding: 3px; display: flex; flex-direction: column; gap: 2px; }
.dwg-tools { height: 50px; flex: none; border: 1px solid #98a8b8; border-width: 2px 1px 1px 2px; display: flex; flex-direction: column; gap: 3px; padding-top: 0; }
.btn-row { display: flex; }
.btn { height: 22px; display: flex; align-items: center; justify-content: center; background: #f0f0f0; border: 1px solid #bdbdbd; font-size: 12px; color: #555; }
.btn.strong { color: #222; }
.b58 { width: 58px; } .b57 { width: 57px; }
.gap3 { margin-left: 3px; } .gap1 { margin-left: 1px; }
.dd { width: 8px; }
.dd i { border: 3px solid transparent; border-top: 4px solid #111; border-bottom: 0; }
.dwg-grid { flex: 1; margin-left: 1px; border: 1px solid #8296a8; border-width: 1px 2px 2px 1px; display: flex; flex-direction: column; min-height: 0; }
.grid-view { flex: 1; min-height: 0; display: flex; overflow: hidden; }
.grid-rows { width: 178px; flex: none; overflow: hidden; }
.grow { height: 19px; display: flex; align-items: stretch; font-size: 12px; white-space: nowrap; }
.grow.head { height: 26px; }
.num { width: 21px; flex: none; display: flex; align-items: center; justify-content: center; background: #f4f4f4; color: #333; border-bottom: 1px solid #ddd; }
.name { width: 151px; flex: none; position: relative; display: flex; align-items: center; padding-left: 30px; background: #ff0; color: #111; overflow: hidden; border-bottom: 1px solid #e6e6a0; }
.name::before { content: ""; position: absolute; left: 8px; top: 0; bottom: 0; width: 16px; border-left: 1px solid #b0b090; background: linear-gradient(#aaa, #aaa) no-repeat 0 9px / 16px 1px; }
.extra { width: 6px; flex: none; display: flex; align-items: center; background: #fff; font-size: 11px; overflow: hidden; }
.head .num { background: #f0f0f0; }
.head .name { padding: 0; justify-content: center; color: #800080; font-size: 12px; letter-spacing: .2px; background: linear-gradient(#fbdca8, #f3bd68); border-bottom: 0; }
.head .name::before { display: none; }
.head .extra { background: #f0f0f0; }
.cur { position: relative; z-index: 1; }
.cur .num { background: #f8c888; color: #c05a10; }
.cur .name { background: #e0f020; box-shadow: inset 0 0 0 3px #000; }
.cur::after { content: ""; position: absolute; left: 170px; bottom: -3px; width: 5px; height: 5px; background: #777; border: 1px solid #fff; }
.vscroll { width: 15px; margin-left: 1px; background: #f0f0f0; display: flex; flex-direction: column; align-items: center; padding-top: 5px; }
.vscroll svg { width: 8px; height: 5px; }
.vscroll .sb-end { margin-top: 72px; }
.thumb { display: block; width: 15px; height: 25px; margin-top: 21px; background: linear-gradient(90deg, #fafafa, #d8d8d8); border: 1px solid #b0b0b0; border-radius: 2px; }
.hscroll { height: 16px; flex: none; width: 178px; background: #f0f0f0; display: flex; align-items: center; padding-left: 5px; }
.hscroll svg { width: 5px; height: 8px; flex: none; }
.thumb-h { width: 15px; height: 15px; margin-left: 13px; background: linear-gradient(#fafafa, #d8d8d8); border: 1px solid #b0b0b0; border-radius: 2px; flex: none; }
.hscroll .sb-end { margin-left: 133px; }
.layer-tree { flex: 1; margin: 0 3px 0 2px; background: #fff; border: 1px solid #999; padding-top: 2px; }
.layer-row { height: 14px; display: flex; align-items: center; padding-left: 15px; font-size: 12px; color: #111; white-space: nowrap; }
.lexp { width: 6px; height: 8px; margin-right: 7px; flex: none; }
.lic { width: 13px; height: 12px; margin-right: 4px; flex: none; }

/* CAD stage */
.stage { flex: 1; min-width: 0; display: flex; flex-direction: column; }
.cad { width: 927px; height: 521px; display: block; flex: none; background: #000; }
.cad path, .cad g { fill: none; }
.white path { stroke: #fff; stroke-width: 1; }
.green path { stroke: #0f0; stroke-width: 2.5; }
.green-thin, .green-thin path { stroke: #0f0; stroke-width: 1; }
.red, .red path { stroke: #f00; stroke-width: 1; }
.yellow path { stroke: #ff0; stroke-width: 1; }
.magenta path { stroke: #f0f; stroke-width: 1; }
.green-line path { stroke: #0f0; stroke-width: 1; }
.cyan { stroke: #18d0f0; stroke-width: 1; }
.cad .axis-g { fill: #0f0; }
.cad .axis-r { fill: #f00; }
.t-small text { font-size: 9px; fill: #0a8f0a; text-anchor: middle; }
.t-gbz text { font-size: 11px; fill: #0a8f0a; text-anchor: middle; }
.t-note text { font-size: 11px; fill: #1fbcbc; }
.t-title text { font-size: 15px; fill: #c8c8c8; text-anchor: middle; }
.t-head text { font-size: 11px; fill: #a8a8a8; text-anchor: middle; }
.t-cell text { font-size: 9.5px; fill: #b4b4b4; text-anchor: middle; }

/* status bar */
.statusbar { flex: 1; display: flex; align-items: flex-start; background: #f0f0f0; overflow: hidden; color: #222; white-space: nowrap; }
.sb-sep { width: 1px; height: 20px; background: #a8a8a8; flex: none; }
.s441 { margin: 0 2px 0 5px; } .s646 { margin: 0 5px 0 2px; } .s911 { margin: 0 9px 0 5px; } .s1193 { margin: 0 4px 0 3px; } .s1328 { margin-left: 3px; }
.sb-btn { height: 24px; display: flex; align-items: flex-start; gap: 4px; padding: 3px 0 0 4px; margin-right: 1px; border-top: 2px solid transparent; flex: none; }
.sb-btn.on { border-top-color: #c4c4c4; background: #f4f4f4; }
.sb-btn b { font-weight: 400; font-size: 12px; line-height: 14px; margin-top: 3px; }
.sb-ic { width: 16px; height: 16px; flex: none; }
.w51 { width: 51px; } .w73 { width: 73px; } .w72 { width: 72px; } .w53 { width: 53px; } .w50 { width: 50px; } .w48 { width: 48px; }
.sb-select { width: 57px; height: 24px; background: #fff; font-size: 14px; padding: 3px 0 0 3px; position: relative; flex: none; }
.sb-select i { position: absolute; right: 3px; top: 11px; border: 3px solid transparent; border-top: 4px solid #111; border-bottom: 0; }
.sb-lbl { color: #a0a0a0; font-size: 13px; line-height: 16px; margin-top: 5px; flex: none; font-family: "Liberation Sans", sans-serif; }
.lx { margin-left: 7px; width: 21px; } .lmm { margin-left: 5px; width: 23px; } .ly { margin-left: 5px; width: 19px; } .deg { margin-left: 5px; width: 8px; }
.sb-input { height: 24px; position: relative; flex: none; background: #f2f2f2; border: 1px solid #e6e6e6; color: #888; font-size: 14px; line-height: 18px; text-align: right; padding: 2px 18px 0 0; font-family: "Liberation Sans", sans-serif; }
.sb-input em { position: absolute; right: 3px; top: 5px; border: 3px solid transparent; border-bottom: 4px solid #b8b8b8; border-top: 0; }
.w53i { width: 53px; } .w66i { width: 66px; margin-left: 11px; }
.sb-check { width: 12px; height: 12px; margin-top: 7px; background: #fff; border: 1px solid #777; flex: none; }
.sb-text { margin: 5px 0 0 8px; font-size: 12px; line-height: 14px; flex: none; }

/* floating toolbar */
.float-bar { position: absolute; left: 459px; top: 155px; width: 300px; height: 43px; background: #dde9f6; border: 1px solid #a2aebb; padding: 6px; }
.float-inner { height: 29px; border: 1px solid #7d97b4; display: flex; align-items: center; gap: 5px; padding-left: 6px; }
.combo { height: 21px; position: relative; background: #fff; font-size: 14px; line-height: 20px; padding-left: 2px; color: #1a2a3a; flex: none; }
.combo i { position: absolute; right: 0; top: 0; bottom: 0; width: 10px; background: #f0f0f0; }
.combo i::after { content: ""; position: absolute; left: 2px; top: 9px; border: 3px solid transparent; border-top: 4px solid #111; border-bottom: 0; }
.c55 { width: 55px; } .c67 { width: 67px; } .c68 { width: 68px; }

/* annotation arrows */
.arrows { position: absolute; left: 0; top: 0; width: 1363px; height: 699px; pointer-events: none; }
.arrow-fill { fill: #f68b3a; }
```
